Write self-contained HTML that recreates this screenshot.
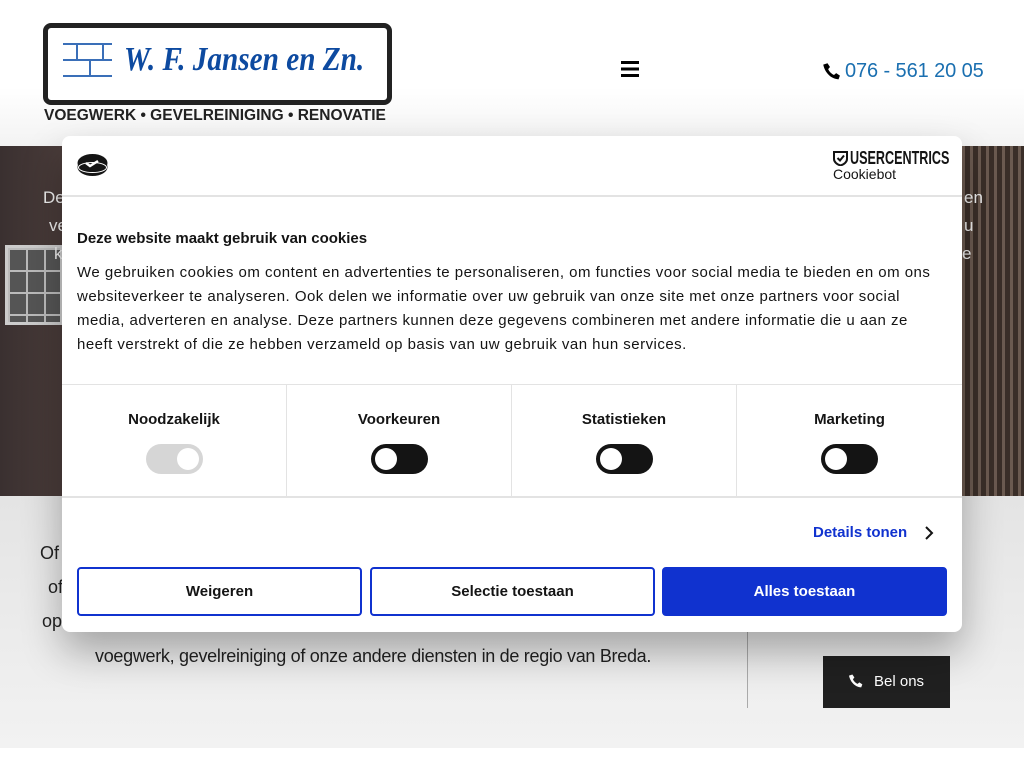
<!DOCTYPE html>
<html><head><meta charset="utf-8"><style>
*{margin:0;padding:0;box-sizing:border-box}
body{width:1024px;height:768px;overflow:hidden;background:#fff;font-family:"Liberation Sans",sans-serif;position:relative}
.hdr{position:absolute;left:0;top:0;width:1024px;height:146px;background:linear-gradient(#fff 60%,#f3f3f3)}
.hero{position:absolute;left:0;top:146px;width:1024px;height:350px;background:linear-gradient(90deg,#3a3030 0%,#4a3c3a 6%,#5a4a45 50%,#4b3c36 94%,#3a302c 100%)}
.win{position:absolute;left:5px;top:245px;width:58px;height:80px;border:3px solid #ccc;background:repeating-linear-gradient(90deg,#bbb 0 2px,transparent 2px 18px),repeating-linear-gradient(#bbb 0 2px,#555 2px 22px)}
.rail{position:absolute;right:0;top:146px;width:62px;height:350px;background:repeating-linear-gradient(90deg,#6b5a50 0 3px,#3a2e28 3px 8px)}
.grey{position:absolute;left:0;top:496px;width:1024px;height:252px;background:linear-gradient(#e4e4e4,#f2f2f2)}
.card{position:absolute;left:62px;top:136px;width:900px;height:496px;background:#fff;border-radius:8px;box-shadow:0 20px 40px rgba(0,0,0,.3)}
.t{position:absolute;font-family:"Liberation Sans",sans-serif;white-space:nowrap}
.tog{position:absolute;width:57px;height:30px;border-radius:15px;background:#141414}
.tog::after{content:"";position:absolute;left:4px;top:4px;width:22px;height:22px;border-radius:50%;background:#fff}
.tog.d{background:#d6d6d6}.tog.d::after{left:31px}
.btn{position:absolute;top:431px;width:285px;height:49px;border:2px solid #1032cf;border-radius:4px;font-weight:bold;font-size:15px;line-height:45px;text-align:center;color:#141414}
</style></head><body>
<div class="hdr"></div>
<div style="position:absolute;left:43px;top:23px;width:349px;height:82px;border:5px solid #222;border-radius:8px;background:#fff"></div>
<svg style="position:absolute;left:62px;top:43px" width="52" height="35" stroke="#3a6fb8" stroke-width="2" fill="none"><path d="M1 1H50M1 17H50M1 33H50M15 1V17M41 1V17M28 17V33"/></svg>
<div class="t" style="left:124px;top:41px;font-family:'Liberation Serif',serif;font-style:italic;font-weight:bold;font-size:34px;color:#0d4aa0;transform:scaleX(.86);transform-origin:left">W. F. Jansen en Zn.</div>
<div class="t" style="left:44px;top:107px;font-weight:bold;font-size:15.5px;color:#222">VOEGWERK • GEVELREINIGING • RENOVATIE</div>
<svg style="position:absolute;left:621px;top:61px" width="18" height="16"><rect y="0" width="18" height="3" fill="#000"/><rect y="6.5" width="18" height="3" fill="#000"/><rect y="13" width="18" height="3" fill="#000"/></svg>
<svg style="position:absolute;left:822px;top:62px" width="20" height="20" viewBox="0 0 24 24"><path fill="#000" d="M6.6 1.5l3 4.5-2.2 2.6c1.3 3 4 5.7 7 7l2.6-2.2 4.5 3-1.7 4.4C11 20.5 3.5 13 1.5 3.2z"/></svg>
<div class="t" style="left:845px;top:60px;font-size:20px;color:#1a6fb0;letter-spacing:-.1px">076 - 561 20 05</div>
<div class="hero"></div><div class="win"></div><div class="rail"></div>
<div class="t" style="left:43px;top:188px;color:#eee;font-size:17px">De</div>
<div class="t" style="left:49px;top:216px;color:#eee;font-size:17px">ve</div>
<div class="t" style="left:54px;top:244px;color:#eee;font-size:17px">k</div>
<div class="t" style="left:964px;top:188px;color:#eee;font-size:17px">en</div>
<div class="t" style="left:964px;top:216px;color:#eee;font-size:17px">u</div>
<div class="t" style="left:962px;top:244px;color:#eee;font-size:17px">e</div>
<div class="grey"></div>
<div class="t" style="left:40px;top:543px;font-size:18px;color:#222">Of</div>
<div class="t" style="left:48px;top:577px;font-size:18px;color:#222">of</div>
<div class="t" style="left:42px;top:611px;font-size:18px;color:#222">op</div>
<div class="t" style="left:95px;top:646px;font-size:18px;color:#222;letter-spacing:-.3px">voegwerk, gevelreiniging of onze andere diensten in de regio van Breda.</div>
<div style="position:absolute;left:747px;top:630px;width:1px;height:78px;background:#aaa"></div>
<div style="position:absolute;left:823px;top:656px;width:127px;height:52px;background:#202020"></div>
<svg style="position:absolute;left:848px;top:673px" width="16" height="17" viewBox="0 0 24 24"><path fill="#fff" d="M6.6 1.5l3 4.5-2.2 2.6c1.3 3 4 5.7 7 7l2.6-2.2 4.5 3-1.7 4.4C11 20.5 3.5 13 1.5 3.2z"/></svg>
<div class="t" style="left:874px;top:673px;font-size:15px;color:#fff">Bel ons</div>
<div class="card">
<svg style="position:absolute;left:15px;top:17px" width="31" height="24" viewBox="0 0 31 24"><ellipse cx="15.5" cy="14" rx="15" ry="9" fill="#141414"/><ellipse cx="15.5" cy="10" rx="15" ry="9" fill="#141414"/><ellipse cx="15.5" cy="14.5" rx="14" ry="5" fill="none" stroke="#fff" stroke-width="1"/><path d="M9 10l4 3 8-5" stroke="#fff" stroke-width="2.5" fill="none"/></svg>
<svg style="position:absolute;left:771px;top:15px" width="15" height="15" viewBox="0 0 15 15"><path d="M1 1h13v7c0 3-3 5.5-6.5 6.5C4 13.5 1 11 1 8z" fill="none" stroke="#141414" stroke-width="2"/><path d="M4.5 7l2.5 2.5 4-5" stroke="#141414" stroke-width="2" fill="none"/></svg>
<div class="t" style="left:788px;top:12px;font-weight:bold;font-size:18px;color:#141414;transform:scaleX(.7);transform-origin:left">USERCENTRICS</div>
<div class="t" style="left:771px;top:30px;font-size:14px;color:#141414">Cookiebot</div>
<div style="position:absolute;left:0;top:59px;width:900px;height:2px;background:#e3e3e3"></div>
<div class="t" style="left:15px;top:94px;font-weight:bold;font-size:15px;color:#141414">Deze website maakt gebruik van cookies</div>
<div class="t" style="left:15px;top:125px;font-size:15px;line-height:24px;color:#141414;letter-spacing:.48px">We gebruiken cookies om content en advertenties te personaliseren, om functies voor social media te bieden en om ons<br>websiteverkeer te analyseren. Ook delen we informatie over uw gebruik van onze site met onze partners voor social<br>media, adverteren en analyse. Deze partners kunnen deze gegevens combineren met andere informatie die u aan ze<br>heeft verstrekt of die ze hebben verzameld op basis van uw gebruik van hun services.</div>
<div style="position:absolute;left:0;top:248px;width:900px;height:114px;border-top:1px solid #e3e3e3;border-bottom:2px solid #e3e3e3"></div>
<div style="position:absolute;left:224px;top:249px;width:1px;height:112px;background:#e3e3e3"></div>
<div style="position:absolute;left:449px;top:249px;width:1px;height:112px;background:#e3e3e3"></div>
<div style="position:absolute;left:674px;top:249px;width:1px;height:112px;background:#e3e3e3"></div>
<div class="t" style="left:0;width:224px;top:275px;text-align:center;font-weight:bold;font-size:15px;color:#141414">Noodzakelijk</div>
<div class="t" style="left:225px;width:224px;top:275px;text-align:center;font-weight:bold;font-size:15px;color:#141414">Voorkeuren</div>
<div class="t" style="left:450px;width:224px;top:275px;text-align:center;font-weight:bold;font-size:15px;color:#141414">Statistieken</div>
<div class="t" style="left:675px;width:225px;top:275px;text-align:center;font-weight:bold;font-size:15px;color:#141414">Marketing</div>
<div class="tog d" style="left:84px;top:308px"></div>
<div class="tog" style="left:309px;top:308px"></div>
<div class="tog" style="left:534px;top:308px"></div>
<div class="tog" style="left:759px;top:308px"></div>
<div class="t" style="left:751px;top:388px;font-weight:bold;font-size:15px;color:#1032cf">Details tonen</div>
<svg style="position:absolute;left:862px;top:390px" width="10" height="14"><path d="M2 1l6 6-6 6" stroke="#141414" stroke-width="2" fill="none"/></svg>
<div class="btn" style="left:15px">Weigeren</div>
<div class="btn" style="left:308px">Selectie toestaan</div>
<div class="btn" style="left:600px;background:#1032cf;color:#fff">Alles toestaan</div>
</div>
</body></html>
